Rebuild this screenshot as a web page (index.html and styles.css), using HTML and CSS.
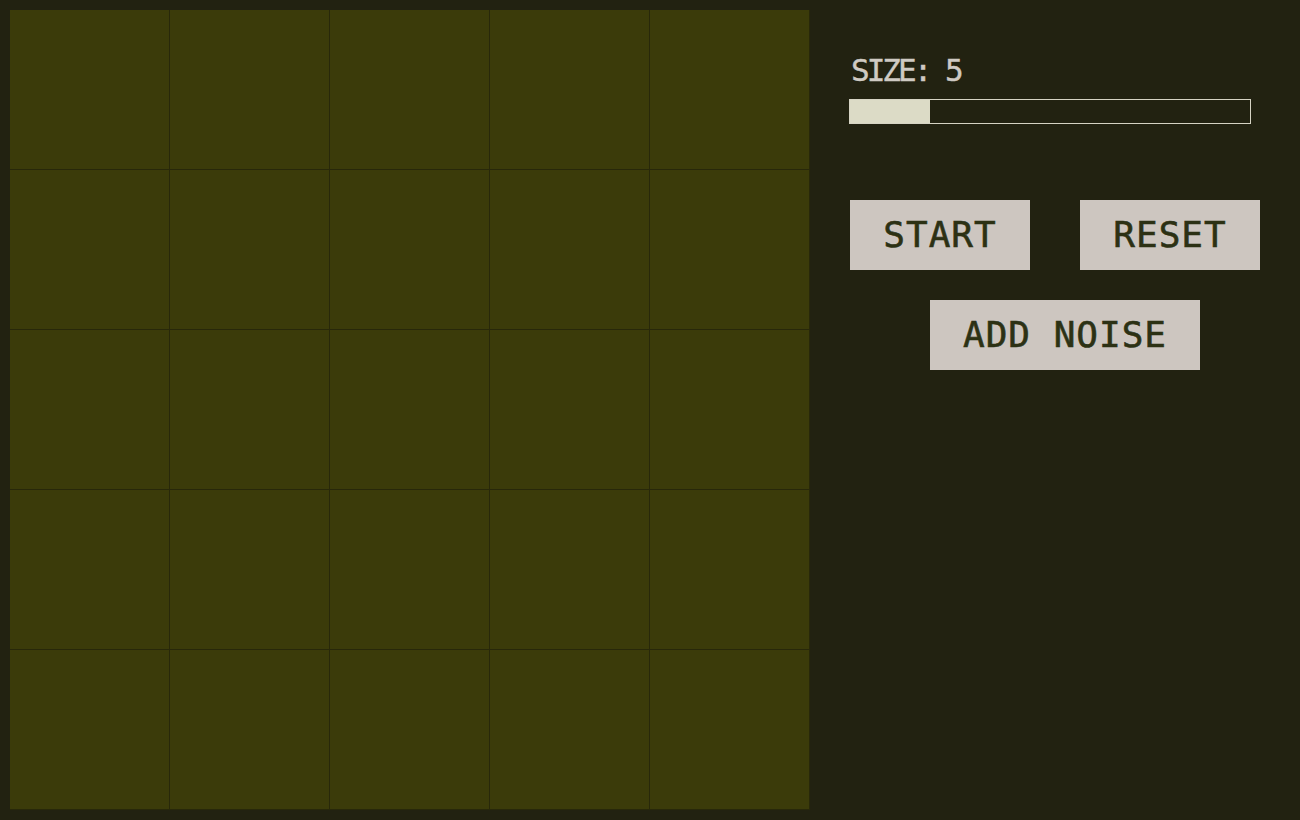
FILE: index.html
```html
<!DOCTYPE html>
<html>
<head>
<meta charset="utf-8">
<link rel="stylesheet" href="styles.css">
</head>
<body>
<div class="app">
  <div class="board">
    <div class="cell"></div><div class="cell"></div><div class="cell"></div><div class="cell"></div><div class="cell"></div>
    <div class="cell"></div><div class="cell"></div><div class="cell"></div><div class="cell"></div><div class="cell"></div>
    <div class="cell"></div><div class="cell"></div><div class="cell"></div><div class="cell"></div><div class="cell"></div>
    <div class="cell"></div><div class="cell"></div><div class="cell"></div><div class="cell"></div><div class="cell"></div>
    <div class="cell"></div><div class="cell"></div><div class="cell"></div><div class="cell"></div><div class="cell"></div>
  </div>
  <div class="panel">
    <div class="size-label">SIZE: 5</div>
    <div class="slider"><div class="slider-fill" style="width: 20%"></div></div>
    <div class="buttons">
      <div class="btn-row">
        <button class="btn">START</button>
        <button class="btn">RESET</button>
      </div>
      <div class="btn-row center">
        <button class="btn wide">ADD NOISE</button>
      </div>
    </div>
  </div>
</div>
</body>
</html>
```

FILE: styles.css
```css
html, body {
  margin: 0;
  padding: 0;
  background: #222211;
  width: 1300px;
  height: 820px;
  overflow: hidden;
}

.app {
  display: flex;
  padding: 10px;
  gap: 40px;
  font-family: "DejaVu Sans Mono", monospace;
}

.board {
  width: 800px;
  height: 800px;
  display: grid;
  grid-template-columns: repeat(5, 160px);
  grid-template-rows: repeat(5, 160px);
  background: #3b3b0a;
}

.cell {
  box-sizing: border-box;
  border-right: 1px solid #28280a;
  border-bottom: 1px solid #28280a;
}

.panel {
  display: flex;
  flex-direction: column;
  width: 410px;
  padding-top: 43px;
}

.size-label {
  color: #cfcac3;
  font-size: 31px;
  letter-spacing: -3px;
  line-height: 34px;
  margin-left: 1px;
  -webkit-text-stroke: 0.4px #cfcac3;
}

.slider {
  margin-top: 12px;
  width: 402px;
  height: 25px;
  box-sizing: border-box;
  border: 1px solid #d6d4c4;
  margin-left: -1px;
}

.slider-fill {
  height: 100%;
  background: #dcdbc6;
}

.buttons {
  margin-top: 76px;
  display: flex;
  flex-direction: column;
  gap: 30px;
}

.btn-row {
  display: flex;
  gap: 50px;
}

.btn-row.center {
  padding-left: 80px;
}

.btn {
  width: 180px;
  height: 70px;
  border: none;
  margin: 0;
  padding: 0;
  background: #cdc6c0;
  color: #2c3114;
  font-family: "DejaVu Sans Mono", monospace;
  font-size: 36px;
  letter-spacing: 1px;
  line-height: 70px;
  -webkit-text-stroke: 0.6px #2c3114;
}

.btn.wide {
  width: 270px;
}
```
